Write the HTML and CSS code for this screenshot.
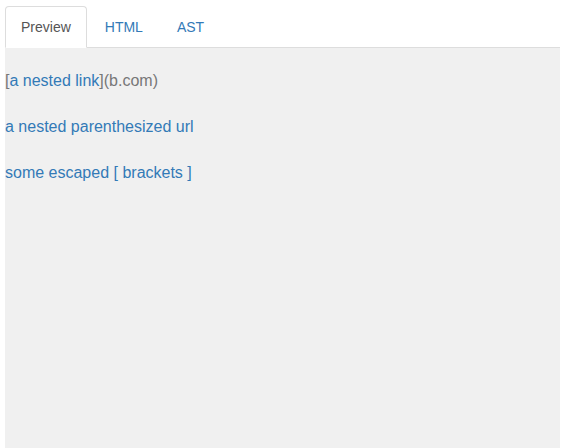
FILE: index.html
```html
<!DOCTYPE html>
<html>
<head>
<meta charset="utf-8">
<link rel="stylesheet" href="styles.css">
</head>
<body>
<div class="wrap">
  <ul class="tabs">
    <li class="tab active"><a>Preview</a></li>
    <li class="tab"><a>HTML</a></li>
    <li class="tab"><a>AST</a></li>
  </ul>
  <div class="preview">
    <p><span class="raw">[</span><a class="link">a nested link</a><span class="raw">](b.com)</span></p>
    <p><a class="link">a nested parenthesized url</a></p>
    <p><a class="link">some escaped [ brackets ]</a></p>
  </div>
</div>
</body>
</html>
```
FILE: styles.css
```css
html, body {
  margin: 0;
  padding: 0;
  height: 100%;
  background: #fff;
}
body {
  font-family: "Liberation Sans", Arial, sans-serif;
  font-size: 14px;
  line-height: 20px;
  color: #333;
}
.wrap {
  box-sizing: border-box;
  height: 100%;
  padding: 6px 2px 0 5px;
  display: flex;
  flex-direction: column;
}
.tabs {
  list-style: none;
  margin: 0;
  padding: 0;
  display: flex;
  border-bottom: 1px solid #ddd;
}
.tab {
  margin-bottom: -1px;
}
.tab a {
  display: block;
  padding: 10px 15px;
  margin-right: 2px;
  border: 1px solid transparent;
  border-radius: 4px 4px 0 0;
  color: #337ab7;
}
.tab.active a {
  color: #555;
  background: #fff;
  border-color: #ddd #ddd transparent;
}
.preview {
  flex: 1;
  background: #f0f0f0;
  padding: 21px 0 0 0;
  font-size: 16px;
  line-height: 23px;
}
.preview p {
  margin: 0 0 23px;
}
.link {
  color: #337ab7;
}
.raw {
  color: #777;
}
```
